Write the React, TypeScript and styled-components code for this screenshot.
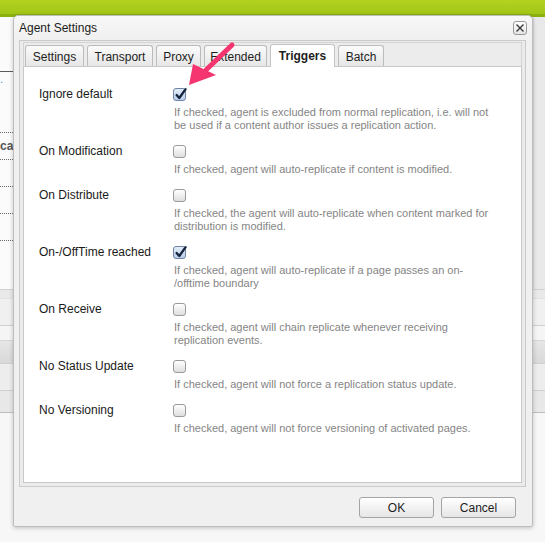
import React from "react";
import styled, { createGlobalStyle, css } from "styled-components";

const GlobalStyle = createGlobalStyle`
  html, body { margin: 0; padding: 0; background: #f7f7f7; }
  body { font-family: "Liberation Sans", Arial, sans-serif; }
  * { box-sizing: border-box; }
`;

const Page = styled.div`
  position: relative;
  width: 545px;
  height: 542px;
  overflow: hidden;
  background: #f7f7f7;
  display: flex;
  flex-direction: column;
`;

const TopBar = styled.div`
  height: 14px;
  background: linear-gradient(#b3d21f, #a2c617);
`;

const TopBarEdge = styled.div`
  height: 3px;
  background: #8bb10f;
`;

const Content = styled.div`
  display: grid;
  grid-template-columns: 1fr 12px;
  height: 272px;
`;

const ListArea = styled.div`
  display: flex;
  flex-direction: column;
  background: #fbfbfb;
`;

const ListHeader = styled.div`
  height: 55px;
  border-bottom: 1px solid #5a5a5a;
`;

const ListSpacer = styled.div`
  height: 34px;
  padding-top: 2px;
  font-size: 11px;
  color: #4a8fd6;
  line-height: 10px;
`;

const ListRow = styled.div`
  height: 27px;
  border-bottom: 1px dotted #6a6a6a;
  display: flex;
  align-items: center;
  font-size: 12px;
  font-weight: bold;
  color: #555;
`;

const SideStrip = styled.div`
  background: #e9e9e9;
  border-left: 1px solid #dcdcdc;
`;

const Band = styled.div<{ h: number; bg: string; line?: string }>`
  height: ${(p) => p.h}px;
  background: ${(p) => p.bg};
  border-top: 1px solid ${(p) => p.line || "#d2d2d2"};
`;

const Dialog = styled.div`
  position: absolute;
  left: 13px;
  top: 15px;
  width: 520px;
  height: 512px;
  border: 1px solid #bdbdbd;
  border-radius: 5px 5px 2px 2px;
  background: #f0f0f0;
  box-shadow: 0 1px 4px rgba(0, 0, 0, 0.22);
  display: flex;
  flex-direction: column;
`;

const TitleBar = styled.div`
  height: 24px;
  display: flex;
  align-items: flex-start;
  justify-content: space-between;
  padding: 0 5px 0 5px;
  background: linear-gradient(#f7f7f7, #f0f0f0);
  border-radius: 5px 5px 0 0;
`;

const Title = styled.div`
  font-size: 12px;
  line-height: 14px;
  padding-top: 5px;
  color: #1c1c1c;
`;

const CloseButton = styled.div`
  margin-top: 5px;
  width: 14px;
  height: 14px;
  border: 1px solid #9a9a9a;
  border-radius: 3px;
  background: linear-gradient(#ffffff, #e4e4e4);
  display: flex;
  align-items: center;
  justify-content: center;
`;

const WindowBody = styled.div`
  margin: 0 6px 0 5px;
  border: 1px solid #cacaca;
  padding: 1px 3px 3px 3px;
  background: #ebebeb;
  display: flex;
  flex-direction: column;
`;

const TabStrip = styled.div`
  height: 24px;
  border: 1px solid #d4d4d4;
  border-bottom: none;
  background: #ececec;
  display: flex;
  align-items: flex-end;
  gap: 3px;
  padding-left: 1px;
  position: relative;
`;

const Tab = styled.div<{ active?: boolean; w: number }>`
  width: ${(p) => p.w}px;
  height: 21px;
  border: 1px solid #bcbcbc;
  border-bottom: none;
  border-radius: 3px 3px 0 0;
  background: linear-gradient(#fbfbfb, #e6e6e6);
  font-size: 12px;
  color: #1e1e1e;
  display: flex;
  align-items: center;
  justify-content: center;
  padding-top: 1px;
  ${(p) =>
    p.active &&
    css`
      height: 23px;
      font-weight: bold;
      background: #ffffff;
      border-color: #c4c4c4;
      margin-bottom: -1px;
      position: relative;
      z-index: 1;
      padding-top: 0;
    `}
`;

const TabBody = styled.div`
  height: 417px;
  background: #ffffff;
  border: 1px solid #c8c8c8;
  padding: 21px 0 0 15px;
  display: flex;
  flex-direction: column;
`;

const FieldRow = styled.div`
  display: grid;
  grid-template-columns: 134px 1fr;
  padding-bottom: 13px;
`;

const FieldLabel = styled.div`
  font-size: 12px;
  line-height: 13px;
  color: #1a1a1a;
`;

const FieldControl = styled.div`
  display: flex;
  flex-direction: column;
  align-items: flex-start;
`;

const CheckBox = styled.div<{ checked?: boolean }>`
  width: 13px;
  height: 13px;
  margin-bottom: 5px;
  border: 1px solid ${(p) => (p.checked ? "#6f84a6" : "#9a9a9a")};
  border-radius: 3px;
  background: ${(p) =>
    p.checked
      ? "linear-gradient(#e2ecf8, #b9cde9)"
      : "linear-gradient(#ffffff, #dedede)"};
  position: relative;
`;

const CheckMark = styled.svg`
  position: absolute;
  left: 0px;
  top: -3px;
`;

const Description = styled.div`
  font-size: 11px;
  line-height: 13px;
  color: #858585;
  padding-left: 1px;
`;

const Footer = styled.div`
  flex: 1;
  display: flex;
  justify-content: flex-end;
  align-items: flex-start;
  gap: 7px;
  padding: 10px 16px 0 0;
`;

const Button = styled.div`
  width: 75px;
  height: 21px;
  border: 1px solid #a4a4a4;
  border-radius: 3px;
  background: linear-gradient(#ffffff, #e6e6e6);
  font-size: 12px;
  color: #1e1e1e;
  display: flex;
  align-items: center;
  justify-content: center;
`;

const Arrow = styled.svg`
  position: absolute;
  left: 180px;
  top: 38px;
`;

const tabs = [
  { label: "Settings", w: 59 },
  { label: "Transport", w: 66 },
  { label: "Proxy", w: 45 },
  { label: "Extended", w: 63 },
  { label: "Triggers", w: 65, active: true },
  { label: "Batch", w: 46 },
];

const fields = [
  {
    label: "Ignore default",
    checked: true,
    desc: [
      "If checked, agent is excluded from normal replication, i.e. will not",
      "be used if a content author issues a replication action.",
    ],
  },
  {
    label: "On Modification",
    checked: false,
    desc: ["If checked, agent will auto-replicate if content is modified."],
  },
  {
    label: "On Distribute",
    checked: false,
    desc: [
      "If checked, the agent will auto-replicate when content marked for",
      "distribution is modified.",
    ],
  },
  {
    label: "On-/OffTime reached",
    checked: true,
    desc: [
      "If checked, agent will auto-replicate if a page passes an on-",
      "/offtime boundary",
    ],
  },
  {
    label: "On Receive",
    checked: false,
    desc: [
      "If checked, agent will chain replicate whenever receiving",
      "replication events.",
    ],
  },
  {
    label: "No Status Update",
    checked: false,
    desc: ["If checked, agent will not force a replication status update."],
  },
  {
    label: "No Versioning",
    checked: false,
    desc: ["If checked, agent will not force versioning of activated pages."],
  },
];

export default function App() {
  return (
    <Page>
      <GlobalStyle />
      <TopBar />
      <TopBarEdge />
      <Content>
        <ListArea>
          <ListHeader />
          <ListSpacer>.</ListSpacer>
          <ListRow />
          <ListRow>cation</ListRow>
          <ListRow />
          <ListRow />
          <ListRow />
        </ListArea>
        <SideStrip />
      </Content>
      <Band h={9} bg="#e9e9e9" line="#d0d0d0" />
      <Band h={27} bg="#f0f0f0" line="#e2e2e2" />
      <Band h={15} bg="#f5f5f5" line="#cfcfcf" />
      <Band h={23} bg="linear-gradient(#e6e6e6, #d9d9d9)" line="#d6d6d6" />
      <Band h={27} bg="#ededed" line="#d0d0d0" />
      <Band h={22} bg="#e8e8e8" line="#d0d0d0" />
      <Band h={1} bg="#bdbdbd" line="#bdbdbd" />

      <Dialog>
        <TitleBar>
          <Title>Agent Settings</Title>
          <CloseButton>
            <svg width="8" height="8" viewBox="0 0 8 8">
              <path d="M0.5 0.5 L7.5 7.5 M7.5 0.5 L0.5 7.5" stroke="#3a3a3a" strokeWidth="1.4" />
            </svg>
          </CloseButton>
        </TitleBar>
        <WindowBody>
          <TabStrip>
            {tabs.map((t) => (
              <Tab key={t.label} w={t.w} active={t.active}>
                {t.label}
              </Tab>
            ))}
          </TabStrip>
          <TabBody>
            {fields.map((f) => (
              <FieldRow key={f.label}>
                <FieldLabel>{f.label}</FieldLabel>
                <FieldControl>
                  <CheckBox checked={f.checked}>
                    {f.checked && (
                      <CheckMark width="14" height="15" viewBox="0 0 14 15">
                        <path
                          d="M2.6 9 L5.3 12 L11.6 3.2"
                          fill="none"
                          stroke="#16233f"
                          strokeWidth="2.3"
                          strokeLinecap="round"
                          strokeLinejoin="round"
                        />
                      </CheckMark>
                    )}
                  </CheckBox>
                  <Description>
                    {f.desc.map((line) => (
                      <div key={line}>{line}</div>
                    ))}
                  </Description>
                </FieldControl>
              </FieldRow>
            ))}
          </TabBody>
        </WindowBody>
        <Footer>
          <Button>OK</Button>
          <Button>Cancel</Button>
        </Footer>
      </Dialog>

      <Arrow width="60" height="55" viewBox="0 0 60 55">
        <line x1="52" y1="7" x2="26" y2="32" stroke="#f4356f" strokeWidth="5" strokeLinecap="round" />
        <polygon points="9,47 13,26 36,37" fill="#f4356f" />
      </Arrow>
    </Page>
  );
}
